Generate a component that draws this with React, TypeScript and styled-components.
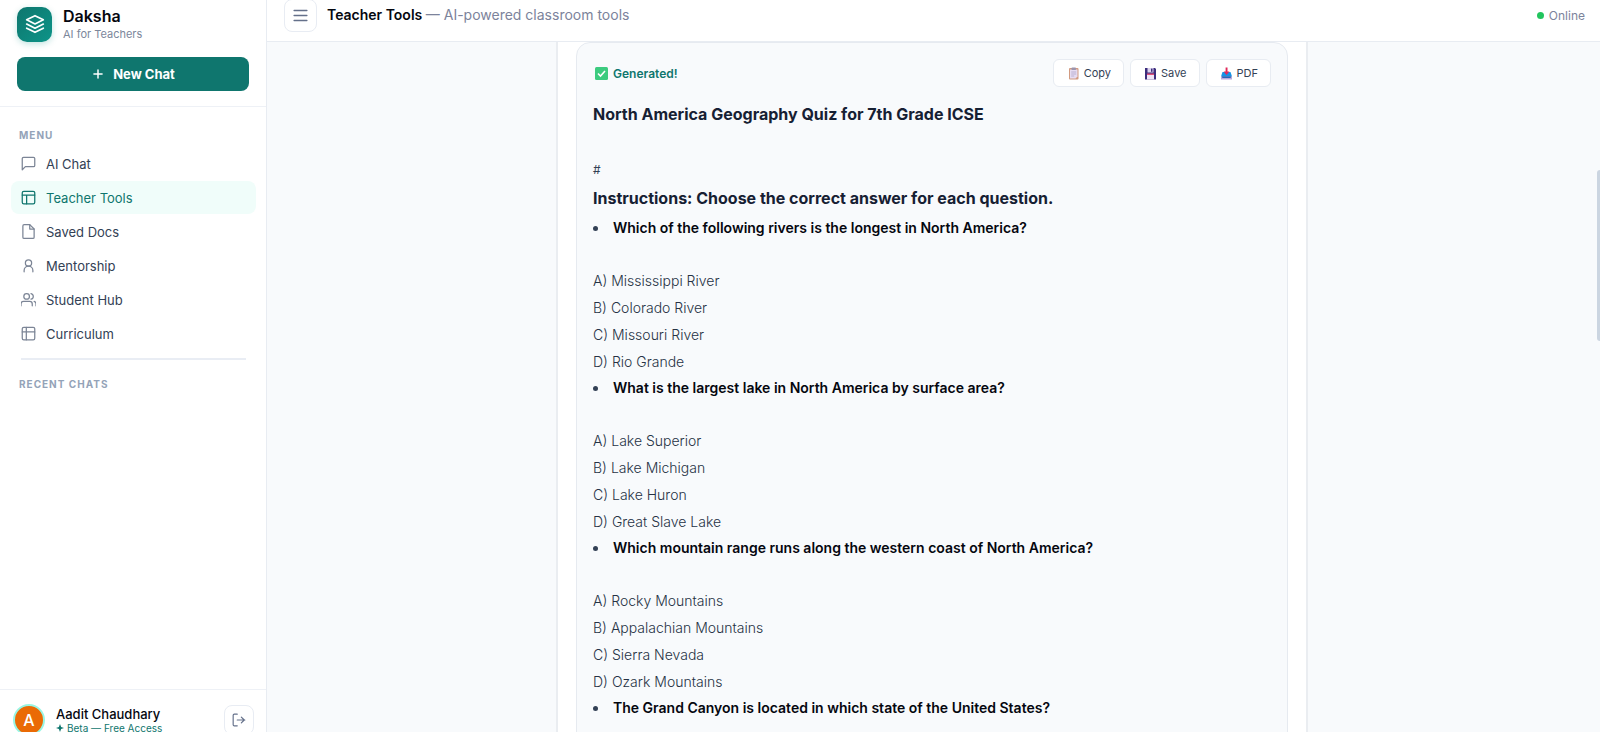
import React from "react";
import styled, { createGlobalStyle } from "styled-components";
import { Plus } from "lucide-react";

const Global = createGlobalStyle`
  *, *::before, *::after { box-sizing: border-box; }
  body { margin: 0; overflow: hidden; color: #0f172a; font-family: Inter, "Liberation Sans", sans-serif; }
  button { font: inherit; cursor: pointer; }
  h1, h2, h3, p, ul { margin: 0; padding: 0; }
`;

const Viewport = styled.div`
  height: 100vh;
  overflow: hidden;
`;

const Shell = styled.div`
  display: flex;
  height: calc(100% + 28px);
  margin-top: -11px;
`;

/* Sidebar */

const Sidebar = styled.aside`
  display: flex;
  flex-direction: column;
  flex: 0 0 267px;
  background: #fff;
  border-right: 1px solid #e8ecf2;
`;

const SidebarTop = styled.div`
  padding: 17px 17px 15px;
  border-bottom: 1px solid #eef1f6;
`;

const Brand = styled.div`
  display: flex;
  align-items: center;
  gap: 11px;
  margin-bottom: 15px;
`;

const BrandMark = styled.div`
  display: grid;
  place-items: center;
  width: 35px;
  height: 35px;
  border-radius: 10px;
  color: #fff;
  background: linear-gradient(135deg, #0f766e, #0d9488);
  box-shadow: 0 2px 6px rgba(13, 148, 136, 0.25);
`;

const BrandName = styled.div`
  font-size: 16px;
  line-height: 20px;
  font-weight: 600;
  color: #05070f;
`;

const BrandTag = styled.div`
  font-size: 11px;
  line-height: 16px;
  color: #7c879b;
`;

const NewChat = styled.button`
  display: flex;
  align-items: center;
  justify-content: center;
  gap: 8px;
  width: 100%;
  height: 34px;
  border: 0;
  border-radius: 8px;
  background: #0f766e;
  color: #fff;
  font-size: 13px;
  font-weight: 700;
`;

const SidebarScroll = styled.div`
  flex: 1;
  padding: 20px 10px 20px 11px;
`;

const SectionLabel = styled.h2`
  padding: 0 8px;
  font-size: 10px;
  line-height: 16px;
  font-weight: 700;
  letter-spacing: 1px;
  text-transform: uppercase;
  color: #94a3b8;
`;

const NavList = styled.nav`
  display: flex;
  flex-direction: column;
  gap: 1px;
  padding-top: 4px;
`;

const NavItem = styled.a<{ $active?: boolean }>`
  display: flex;
  align-items: center;
  gap: 10px;
  height: 33px;
  padding: 0 10px;
  border-radius: 8px;
  font-size: 13px;
  text-decoration: none;
  color: ${(p) => (p.$active ? "#0f766e" : "#334155")};
  background: ${(p) => (p.$active ? "#f0fdfa" : "transparent")};
  svg { color: ${(p) => (p.$active ? "#0f766e" : "#7c8596")}; }
`;

const Divider = styled.hr`
  height: 2px;
  margin: 8px 10px 16px;
  border: 0;
  background: #e9edf4;
`;

const UserBar = styled.div`
  display: flex;
  align-items: center;
  gap: 11px;
  height: 60px;
  padding: 0 12px 0 13px;
  border-top: 1px solid #eef1f6;
`;

const Avatar = styled.div`
  display: grid;
  place-items: center;
  width: 32px;
  height: 32px;
  border: 2px solid #99f6e4;
  border-radius: 50%;
  background: #ea6a05;
  color: #fff;
  font-size: 16px;
  font-weight: 500;
`;

const UserInfo = styled.div`
  flex: 1;
`;

const UserName = styled.div`
  font-size: 13px;
  line-height: 16px;
  font-weight: 500;
  color: #05070f;
`;

const UserPlan = styled.div`
  display: flex;
  align-items: center;
  gap: 3px;
  font-size: 10px;
  line-height: 12px;
  color: #0f766e;
`;

const IconButton = styled.button<{ $size: number }>`
  display: grid;
  place-items: center;
  width: ${(p) => p.$size}px;
  height: ${(p) => p.$size}px;
  padding: 0;
  border: 1px solid #e8ecf3;
  border-radius: 8px;
  background: #fff;
  color: #64708a;
`;

/* Main column */

const Main = styled.div`
  position: relative;
  display: flex;
  flex: 1;
  flex-direction: column;
  min-width: 0;
  background: #f8fafc;
`;

const TopBar = styled.header`
  display: flex;
  flex: 0 0 53px;
  align-items: center;
  gap: 10px;
  padding: 0 15px 0 17px;
  border-bottom: 1px solid #e8ecf2;
  background: #fff;
`;

const PageTitle = styled.h1`
  flex: 1;
  font-size: 14px;
  line-height: 20px;
  font-weight: 600;
  color: #05070f;
  span { font-weight: 400; color: #7c839b; }
`;

const Status = styled.div`
  display: flex;
  align-items: center;
  gap: 5px;
  font-size: 12px;
  color: #7c839b;
  &::before {
    content: "";
    width: 7px;
    height: 7px;
    border-radius: 50%;
    background: #22c55e;
  }
`;

const Content = styled.main`
  flex: 1;
  min-height: 0;
  padding-right: 3px;
  overflow: hidden;
`;

const Panel = styled.section`
  max-width: 752px;
  margin: 0 auto;
  padding: 0 18px;
  border: solid #eaedf1;
  border-width: 0 2px;
  background: #fff;
`;

const Result = styled.article`
  padding: 16px 16px 60px;
  border: 1px solid #e6eaf0;
  border-radius: 14px 14px 0 0;
  background: #f8fafc;
`;

const ResultHead = styled.div`
  display: flex;
  align-items: center;
  gap: 6px;
  margin-bottom: 13px;
`;

const Generated = styled.div`
  display: flex;
  flex: 1;
  align-items: center;
  gap: 4px;
  font-size: 12px;
  font-weight: 600;
  color: #0f766e;
`;

const ActionButton = styled.button`
  display: flex;
  align-items: center;
  gap: 4px;
  height: 28px;
  padding: 0 12px 0 13px;
  border: 1px solid #e8ecf2;
  border-radius: 6px;
  background: #fff;
  color: #334155;
  font-size: 11px;
`;

const Heading = styled.h2`
  font-size: 16px;
  line-height: 28px;
  font-weight: 700;
  color: #162033;
`;

const Stray = styled.p`
  margin-top: 28px;
  font-size: 12px;
  line-height: 28px;
  color: #334155;
`;

const Question = styled.h3`
  display: flex;
  align-items: center;
  gap: 15px;
  margin-bottom: 26px;
  font-size: 14px;
  line-height: 26px;
  font-weight: 600;
  color: #05070f;
  &::before {
    content: "";
    width: 5px;
    height: 5px;
    border-radius: 50%;
    background: #334155;
  }
`;

const Choice = styled.li`
  list-style: none;
  font-size: 14px;
  line-height: 27px;
  font-weight: 300;
  color: #263244;
`;

const QuizBody = styled.div`
  padding-top: 3px;
`;

const ScrollThumb = styled.div`
  position: absolute;
  top: 181px;
  right: 0;
  width: 3px;
  height: 171px;
  border-radius: 3px 0 0 3px;
  background: #cbd5e1;
`;

const Stroke = ({ size = 15, children }: { size?: number; children: React.ReactNode }) => (
  <svg width={size} height={size} viewBox="0 0 24 24" fill="none" stroke="currentColor"
    strokeWidth={2} strokeLinecap="round" strokeLinejoin="round" aria-hidden>
    {children}
  </svg>
);

const nav = [
  { label: "AI Chat", icon: <path d="M22 15a2 2 0 0 1-2 2H7l-5 5V4a2 2 0 0 1 2-2h16a2 2 0 0 1 2 2z" /> },
  { label: "Teacher Tools", active: true, icon: <><rect x="2" y="2" width="20" height="20" rx="2.5" /><path d="M2 8h20M9 22V8" /></> },
  { label: "Saved Docs", icon: <><path d="M14 1H5a2 2 0 0 0-2 2v18a2 2 0 0 0 2 2h14a2 2 0 0 0 2-2V8z" /><path d="M14 1v7h7" /></> },
  { label: "Mentorship", icon: <><circle cx="12" cy="8" r="5" /><path d="M5 22v-2a7 7 0 0 1 14 0v2" /></> },
  { label: "Student Hub", icon: <><circle cx="9" cy="7" r="4.5" /><path d="M0 22v-3a4 4 0 0 1 4-4h10a4 4 0 0 1 4 4v3M24 22v-3a4 4 0 0 0-3-4M16 2.5a4.6 4.6 0 0 1 0 9" /></> },
  { label: "Curriculum", icon: <><rect x="2" y="2" width="20" height="20" rx="2.5" /><path d="M2 9.5h20M8.5 2v20" /></> },
];

const CheckBadge = () => (
  <svg width="16" height="13" viewBox="0 0 16 13" aria-hidden>
    <rect x="2" width="13" height="13" rx="1.5" fill="#3ccb7f" />
    <path d="M5 6.5l2.5 2.5L12 4" fill="none" stroke="#fff" strokeWidth="1.6" />
  </svg>
);
const ClipboardEmoji = () => (
  <svg width="13" height="13" viewBox="0 0 13 13" aria-hidden>
    <rect x="2" y="1" width="9.5" height="11.5" rx="1" fill="#d29a80" />
    <path d="M3 2.5h7.5v7L8.5 11.5H3z" fill="#e6dcf2" />
    <rect x="4.5" y="0.5" width="4.5" height="2.5" rx="0.8" fill="#9b94ad" />
    <path d="M4.2 5h5M4.2 7h5M4.2 9h3" stroke="#a79fc4" strokeWidth="0.7" />
  </svg>
);
const DiskEmoji = () => (
  <svg width="13" height="13" viewBox="0 0 13 13" aria-hidden>
    <path d="M1 1h10l1 1v10.5H1z" fill="#3b2d7c" />
    <rect x="3.5" y="1" width="6" height="4.5" fill="#ddd3ee" />
    <rect x="7" y="1.6" width="1.5" height="3.2" fill="#3b2d7c" />
    <rect x="3" y="7" width="7" height="5.5" fill="#eee4f6" />
    <rect x="3" y="6.5" width="7" height="1.5" fill="#e0507a" />
  </svg>
);
const InboxEmoji = () => (
  <svg width="13" height="13" viewBox="0 0 13 13" aria-hidden>
    <path d="M2.5 5h8l1.5 4.5H1z" fill="#1593e6" />
    <path d="M1 9.5h11v3H1z" fill="#b9a9dc" />
    <path d="M1.5 9.2h10l-1 1.8h-8z" fill="#2766b8" />
    <path d="M5.6 0.5h1.9v4h2L6.5 8 3.6 4.5h2z" fill="#e0285a" />
  </svg>
);

const questions = [
  { text: "Which of the following rivers is the longest in North America?", choices: ["A) Mississippi River", "B) Colorado River", "C) Missouri River", "D) Rio Grande"] },
  { text: "What is the largest lake in North America by surface area?", choices: ["A) Lake Superior", "B) Lake Michigan", "C) Lake Huron", "D) Great Slave Lake"] },
  { text: "Which mountain range runs along the western coast of North America?", choices: ["A) Rocky Mountains", "B) Appalachian Mountains", "C) Sierra Nevada", "D) Ozark Mountains"] },
  { text: "The Grand Canyon is located in which state of the United States?", choices: [] },
];

export default function App() {
  return (
    <Viewport>
      <Global />
      <Shell>
        <Sidebar>
          <SidebarTop>
            <Brand>
              <BrandMark>
                <Stroke size={20}>
                  <path d="M12 2L2 7l10 5 10-5zM2 12l10 5 10-5M2 17l10 5 10-5" />
                </Stroke>
              </BrandMark>
              <div>
                <BrandName>Daksha</BrandName>
                <BrandTag>AI for Teachers</BrandTag>
              </div>
            </Brand>
            <NewChat type="button"><Plus size={14} strokeWidth={2.5} />New Chat</NewChat>
          </SidebarTop>
          <SidebarScroll>
            <SectionLabel>Menu</SectionLabel>
            <NavList>
              {nav.map((n) => (
                <NavItem key={n.label} href="#" $active={n.active}>
                  <Stroke>{n.icon}</Stroke>{n.label}
                </NavItem>
              ))}
            </NavList>
            <Divider />
            <SectionLabel>Recent Chats</SectionLabel>
          </SidebarScroll>
          <UserBar>
            <Avatar>A</Avatar>
            <UserInfo>
              <UserName>Aadit Chaudhary</UserName>
              <UserPlan>
                <svg width="8" height="8" viewBox="0 0 8 8" aria-hidden><path d="M4 0l1.1 2.9L8 4 5.1 5.1 4 8 2.9 5.1 0 4l2.9-1.1z" fill="currentColor" /></svg>
                Beta — Free Access
              </UserPlan>
            </UserInfo>
            <IconButton type="button" $size={30} aria-label="Log out">
              <Stroke size={14}><path d="M9 22H4a2 2 0 0 1-2-2V4a2 2 0 0 1 2-2h5M16 17l5-5-5-5M22 12H9" /></Stroke>
            </IconButton>
          </UserBar>
        </Sidebar>
        <Main>
          <TopBar>
            <IconButton type="button" $size={33} aria-label="Toggle menu">
              <Stroke size={17}><path d="M3 5h18M3 12h18M3 19h18" /></Stroke>
            </IconButton>
            <PageTitle>Teacher Tools <span>— AI-powered classroom tools</span></PageTitle>
            <Status>Online</Status>
          </TopBar>
          <Content>
            <Panel>
              <Result>
                <ResultHead>
                  <Generated><CheckBadge />Generated!</Generated>
                  <ActionButton type="button"><ClipboardEmoji />Copy</ActionButton>
                  <ActionButton type="button"><DiskEmoji />Save</ActionButton>
                  <ActionButton type="button"><InboxEmoji />PDF</ActionButton>
                </ResultHead>
                <Heading>North America Geography Quiz for 7th Grade ICSE</Heading>
                <Stray>#</Stray>
                <Heading>Instructions: Choose the correct answer for each question.</Heading>
                <QuizBody>
                  {questions.map((q) => (
                    <section key={q.text}>
                      <Question>{q.text}</Question>
                      <ul>{q.choices.map((c) => <Choice key={c}>{c}</Choice>)}</ul>
                    </section>
                  ))}
                </QuizBody>
              </Result>
            </Panel>
          </Content>
          <ScrollThumb />
        </Main>
      </Shell>
    </Viewport>
  );
}
